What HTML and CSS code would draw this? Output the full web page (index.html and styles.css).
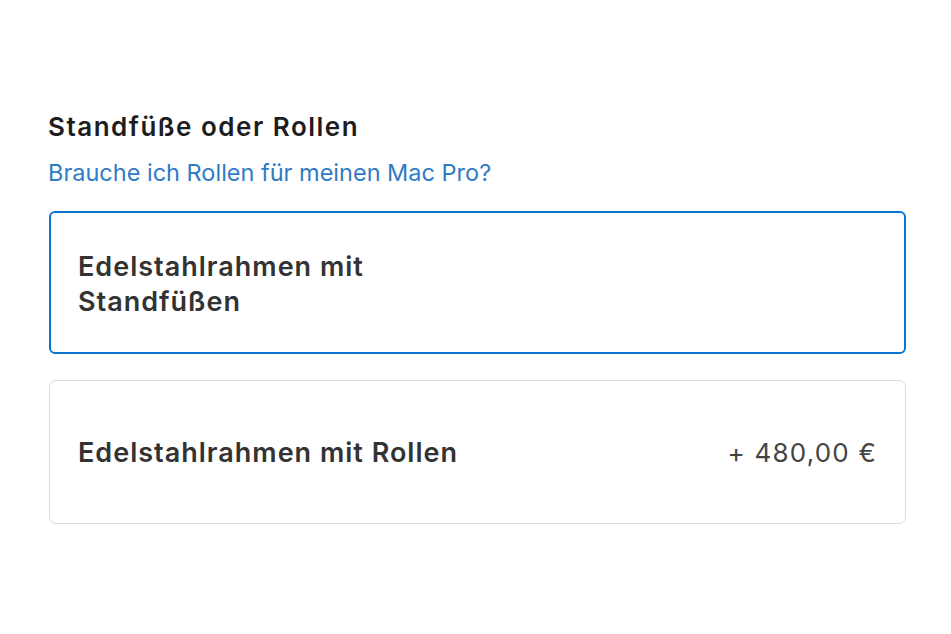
FILE: index.html
```html
<!DOCTYPE html>
<html lang="de">
<head>
    <meta charset="UTF-8" />
    <meta name="viewport" content="width=device-width, initial-scale=1" />
    <title>Standfüße oder Rollen</title>
    <link rel="stylesheet" href="styles.css">
</head>
<body>
    <section class="options">
        <h2 class="options-title">Standfüße oder Rollen</h2>
        <a class="options-help" href="#">Brauche ich Rollen für meinen Mac Pro?</a>

        <div class="option-list">
            <div class="option selected">
                <span class="option-name">Edelstahlrahmen mit<br>Standfüßen</span>
            </div>
            <div class="option">
                <span class="option-name">Edelstahlrahmen mit Rollen</span>
                <span class="option-price">+ 480,00 €</span>
            </div>
        </div>
    </section>
</body>
</html>
```

FILE: styles.css
```css
body {
    margin: 0;
    background: #fff;
    font-family: Inter, 'Noto Sans', sans-serif;
    color: #1d1d1f;
}
.options {
    padding: 111px 45px 0 48px;
}
.options-title {
    margin: 0;
    font-size: 26px;
    line-height: 32px;
    font-weight: 600;
    letter-spacing: 1.5px;
}
.options-help {
    display: block;
    margin-top: 16px;
    font-size: 23.5px;
    line-height: 28px;
    color: #2f7bc4;
    text-decoration: none;
}
.option-list {
    margin-top: 24px;
    display: flex;
    flex-direction: column;
    gap: 26px;
}
.option {
    height: 144px;
    box-sizing: border-box;
    border: 1px solid #d9d9d9;
    border-radius: 7px;
    margin-left: 1px;
    padding: 0 28px;
    display: flex;
    align-items: center;
    justify-content: space-between;
    color: #333;
}
.option.selected {
    height: 143px;
    border: 2px solid #0a76d1;
    border-radius: 6px;
    padding: 3px 27px 0;
}
.option-name {
    font-size: 27px;
    line-height: 35px;
    font-weight: 600;
    letter-spacing: 1px;
}
.option-price {
    font-size: 26px;
    letter-spacing: 1.2px;
    color: #444;
}
```
